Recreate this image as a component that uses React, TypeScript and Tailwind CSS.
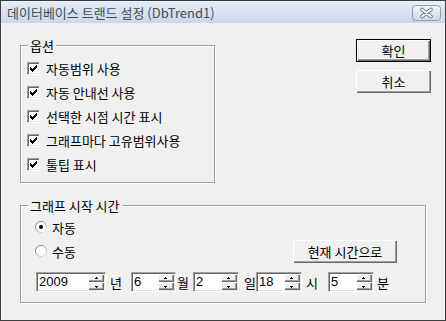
import React from 'react';

const raised =
  'bg-[#f0f0f0] shadow-[inset_1px_1px_0_#ffffff,inset_-1px_-1px_0_#696969,inset_-2px_-2px_0_#a0a0a0]';
const sunken =
  'border border-t-[#a0a0a0] border-l-[#a0a0a0] border-r-white border-b-white shadow-[inset_1px_1px_0_#696969,inset_-1px_-1px_0_#e3e3e3]';
const etched = 'border border-[#a0a0a0] shadow-[inset_1px_1px_0_#ffffff,1px_1px_0_#ffffff]';

const CHECK = [2, 3, 4, 3, 2, 1, 0];

const CheckBox = () => (
  <div className={`w-[13px] h-[13px] bg-white shrink-0 ${sunken}`}>
    <svg width="13" height="13" viewBox="0 0 13 13" shapeRendering="crispEdges" className="-ml-px -mt-px">
      {CHECK.map((s, i) => (
        <rect key={i} x={3 + i} y={3 + s} width="1" height="3" fill="#000" />
      ))}
    </svg>
  </div>
);

const Radio = ({ on }: { on?: boolean }) => (
  <svg width="12" height="12" viewBox="0 0 12 12" className="shrink-0">
    <defs>
      <linearGradient id="rg" x1="0" y1="0" x2="1" y2="1">
        <stop offset="0" stopColor="#7a7a7a" />
        <stop offset="0.5" stopColor="#a0a0a0" />
        <stop offset="1" stopColor="#ffffff" />
      </linearGradient>
    </defs>
    <circle cx="6" cy="6" r="5.5" fill="#fff" stroke="url(#rg)" />
    {on && <circle cx="6" cy="6" r="2" fill="#000" />}
  </svg>
);

const Arrow = ({ up }: { up?: boolean }) => (
  <svg width="5" height="3" viewBox="0 0 5 3" shapeRendering="crispEdges">
    {up ? (
      <>
        <rect x="2" y="0" width="1" height="1" fill="#000" />
        <rect x="1" y="1" width="3" height="1" fill="#000" />
      </>
    ) : (
      <>
        <rect x="1" y="1" width="3" height="1" fill="#000" />
        <rect x="2" y="2" width="1" height="1" fill="#000" />
      </>
    )}
  </svg>
);

const Spin = ({ value, w }: { value: string; w: string }) => (
  <div className={`${w} h-[20px] bg-white flex items-stretch shrink-0 ${sunken}`}>
    <span className="flex-1 pl-[2px] pt-[1px] text-[13px] leading-[15px] font-['Liberation_Sans',sans-serif] text-black">
      {value}
    </span>
    <div className="w-[16px] flex flex-col py-[1px] mr-[1px]">
      <div className={`flex-1 flex items-center justify-center ${raised}`}>
        <Arrow up />
      </div>
      <div className={`flex-1 flex items-center justify-center ${raised}`}>
        <Arrow />
      </div>
    </div>
  </div>
);

const Button = ({ label, def, w = 'w-[75px]' }: { label: string; def?: boolean; w?: string }) => (
  <div
    className={`${w} h-[23px] flex items-center justify-center text-[13px] leading-[15px] text-black ${raised} ${
      def ? 'border border-black' : ''
    }`}
  >
    {label}
  </div>
);

const CheckRow = ({ label }: { label: string }) => (
  <div className="h-[24px] flex items-center gap-[6px]">
    <CheckBox />
    <span className="text-[13px] leading-[15px] text-black">{label}</span>
  </div>
);

export default function App() {
  return (
    <div className="w-[446px] h-[321px] flex flex-col bg-[#f0f0f0] border border-[#3f3f3f] font-['Noto_Sans_CJK_KR',sans-serif] overflow-hidden">
      {/* title bar */}
      <div className="h-[22px] shrink-0 flex items-center justify-between pl-[6px] pr-[4px] bg-gradient-to-b from-[#e6eef8] to-[#c8d8eb]">
        <span className="text-[13px] leading-[15px] text-[#4a4a4a]">데이터베이스 트랜드 설정 (DbTrend1)</span>
        <svg width="29" height="16" viewBox="0 0 29 16" className="mt-[2px]">
          <defs>
            <linearGradient id="cb" x1="0" y1="0" x2="0" y2="1">
              <stop offset="0" stopColor="#eef3f9" />
              <stop offset="1" stopColor="#cbd8e8" />
            </linearGradient>
          </defs>
          <rect x="0.5" y="0.5" width="28" height="15" rx="3" fill="url(#cb)" stroke="#8e9db1" />
          <path d="M10 4.5 L19 11.5 M19 4.5 L10 11.5" stroke="#6a7588" strokeWidth="3.6" strokeLinecap="round" />
          <path d="M10 4.5 L19 11.5 M19 4.5 L10 11.5" stroke="#ffffff" strokeWidth="1.8" strokeLinecap="round" />
        </svg>
      </div>

      {/* body */}
      <div className="flex-1 flex flex-col pl-[19px]">
        <div className="flex items-start">
          <div className={`mt-[22px] w-[195px] h-[138px] flex flex-col pl-[6px] ${etched}`}>
            <span className="-mt-[8px] ml-[1px] px-[2px] self-start bg-[#f0f0f0] text-[13px] leading-[15px] text-black">
              옵션
            </span>
            <div className="mt-[3px] flex flex-col">
              <CheckRow label="자동범위 사용" />
              <CheckRow label="자동 안내선 사용" />
              <CheckRow label="선택한 시점 시간 표시" />
              <CheckRow label="그래프마다 고유범위사용" />
              <CheckRow label="툴팁 표시" />
            </div>
          </div>
          <div className="ml-[141px] mt-[16px] flex flex-col gap-[8px]">
            <Button label="확인" def />
            <Button label="취소" />
          </div>
        </div>

        <div className={`mt-[22px] w-[406px] h-[98px] flex flex-col ${etched}`}>
          <span className="-mt-[8px] ml-[7px] px-[2px] self-start bg-[#f0f0f0] text-[13px] leading-[15px] text-black">
            그래프 시작 시간
          </span>
          <div className="mt-[2px] h-[24px] flex items-center pl-[14px] gap-[5px]">
            <Radio on />
            <span className="text-[13px] leading-[15px] text-black">자동</span>
          </div>
          <div className="h-[24px] flex items-center pl-[14px]">
            <Radio />
            <span className="ml-[5px] text-[13px] leading-[15px] text-black">수동</span>
            <div className="ml-auto mr-[28px]">
              <Button label="현재 시간으로" w="w-[104px]" />
            </div>
          </div>
          <div className="mt-[9px] flex items-center pl-[15px] text-[13px] leading-[15px] text-black">
            <Spin value="2009" w="w-[70px]" />
            <span className="ml-[4px]">년</span>
            <div className="ml-[9px]">
              <Spin value="6" w="w-[45px]" />
            </div>
            <span className="ml-[1px]">월</span>
            <div className="ml-[4px]">
              <Spin value="2" w="w-[46px]" />
            </div>
            <span className="ml-[5px]">일</span>
            <div>
              <Spin value="18" w="w-[46px]" />
            </div>
            <span className="ml-[4px]">시</span>
            <div className="ml-[10px]">
              <Spin value="5" w="w-[46px]" />
            </div>
            <span className="ml-[3px]">분</span>
          </div>
        </div>
      </div>
    </div>
  );
}
